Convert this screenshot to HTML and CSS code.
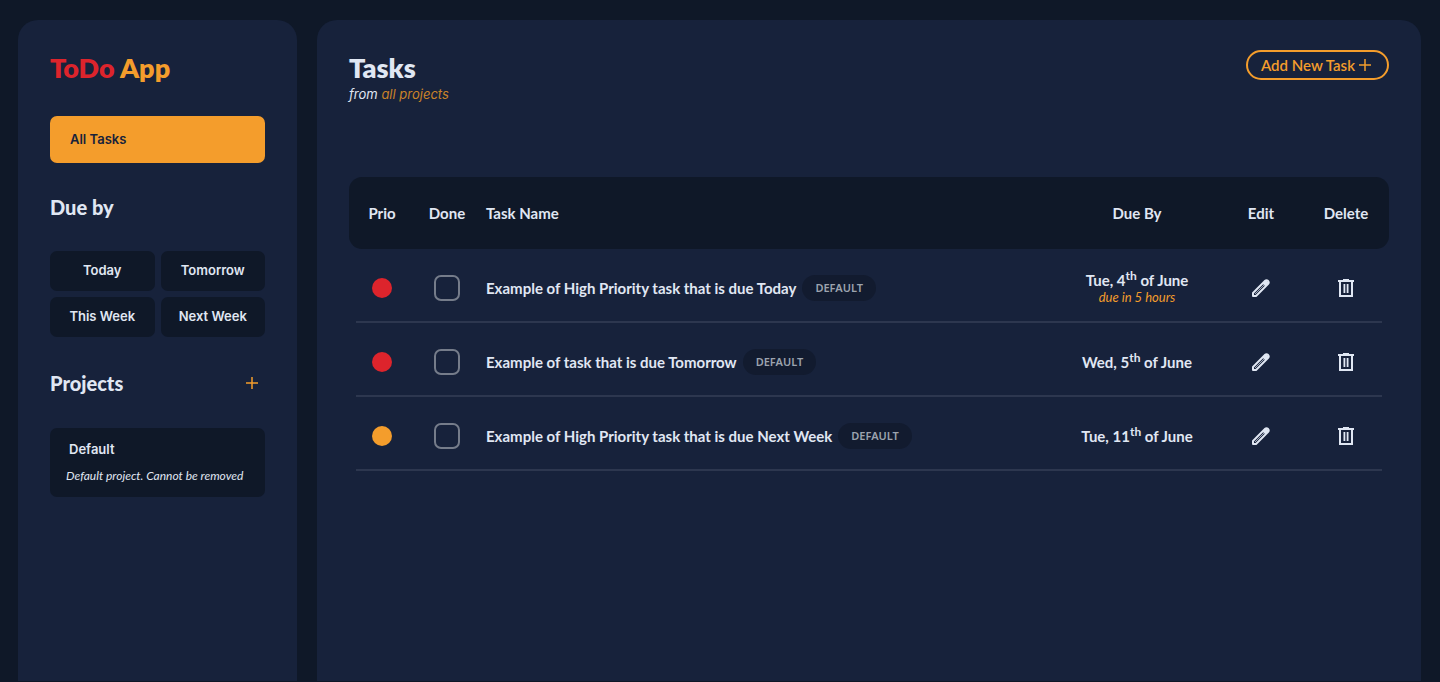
FILE: index.html
```html
<!DOCTYPE html>
<html lang="en">
<head>
<meta charset="utf-8">
<title>ToDo App</title>
<link rel="stylesheet" href="styles.css">
</head>
<body>
<svg class="sprite" aria-hidden="true">
  <symbol id="pencil" viewBox="0 0 18 18"><path fill="none" stroke="currentColor" stroke-width="2" stroke-linejoin="round" d="M1 17v-3L13.200 1.800a1.800 1.800 0 0 1 2.600 0l.4.4a1.800 1.800 0 0 1 0 2.600L4 17z"/><path fill="currentColor" d="M10.500 4.500L14 1l3 3-3.500 3.500z"/><path stroke="currentColor" stroke-width=".7" d="M3 15l9-9"/></symbol>
  <symbol id="trash" viewBox="0 0 18 18"><path fill="none" stroke="currentColor" stroke-width="2" d="M1 2h16M6 1h6M3 2.500V17h12V2.500"/><path stroke="currentColor" stroke-width="1.800" d="M7.400 5v9M10.600 5v9"/></symbol>
  <symbol id="plus" viewBox="0 0 12 12"><path stroke="currentColor" stroke-width="1.500" d="M6 0v12M0 6h12"/></symbol>
</svg>
<div class="app">
  <aside class="panel sidebar">
    <h1 class="logo"><span class="logo-red">ToDo</span> App</h1>
    <button class="all-tasks">All Tasks</button>
    <h2 class="section-title">Due by</h2>
    <div class="due-grid">
      <button class="due-button">Today</button>
      <button class="due-button">Tomorrow</button>
      <button class="due-button">This Week</button>
      <button class="due-button">Next Week</button>
    </div>
    <div class="projects-head">
      <h2 class="section-title">Projects</h2>
      <button class="add-project" aria-label="Add project"><svg class="plus-icon"><use href="#plus"/></svg></button>
    </div>
    <button class="project">
      <span class="project-name">Default</span>
      <em class="project-note">Default project. Cannot be removed</em>
    </button>
  </aside>
  <main class="panel main">
    <header class="main-head">
      <div class="main-heading">
        <h2 class="main-title">Tasks</h2>
        <p class="subtitle">from <span class="subtitle-project">all projects</span></p>
      </div>
      <button class="add-task">Add New Task <svg class="plus-icon"><use href="#plus"/></svg></button>
    </header>
    <table class="tasks">
      <thead>
        <tr><th class="col-prio">Prio</th><th class="col-done">Done</th><th class="name">Task Name</th><th class="col-due">Due By</th><th class="col-edit">Edit</th><th class="col-delete">Delete</th></tr>
      </thead>
      <tbody>
        <tr>
          <td><span class="dot dot-high"></span></td>
          <td><input class="check" type="checkbox" aria-label="Done"></td>
          <td class="name"><div class="task"><span>Example of High Priority task that is due Today</span><span class="tag">DEFAULT</span></div></td>
          <td><div class="date">Tue, 4<sup>th</sup> of June</div><em class="due-in">due in 5 hours</em></td>
          <td><button class="icon-button" aria-label="Edit"><svg class="icon"><use href="#pencil"/></svg></button></td>
          <td><button class="icon-button" aria-label="Delete"><svg class="icon"><use href="#trash"/></svg></button></td>
        </tr>
        <tr>
          <td><span class="dot dot-high"></span></td>
          <td><input class="check" type="checkbox" aria-label="Done"></td>
          <td class="name"><div class="task"><span>Example of task that is due Tomorrow</span><span class="tag">DEFAULT</span></div></td>
          <td><div class="date">Wed, 5<sup>th</sup> of June</div></td>
          <td><button class="icon-button" aria-label="Edit"><svg class="icon"><use href="#pencil"/></svg></button></td>
          <td><button class="icon-button" aria-label="Delete"><svg class="icon"><use href="#trash"/></svg></button></td>
        </tr>
        <tr>
          <td><span class="dot dot-medium"></span></td>
          <td><input class="check" type="checkbox" aria-label="Done"></td>
          <td class="name"><div class="task"><span>Example of High Priority task that is due Next Week</span><span class="tag">DEFAULT</span></div></td>
          <td><div class="date">Tue, 11<sup>th</sup> of June</div></td>
          <td><button class="icon-button" aria-label="Edit"><svg class="icon"><use href="#pencil"/></svg></button></td>
          <td><button class="icon-button" aria-label="Delete"><svg class="icon"><use href="#trash"/></svg></button></td>
        </tr>
      </tbody>
    </table>
  </main>
</div>
</body>
</html>
```
FILE: styles.css
```css
:root {
  --bg: #0f1828;
  --panel: #17223b;
  --text: #e0e7f3;
  --orange: #f49d2c;
  --red: #dd242c;
}
* { box-sizing: border-box; }
body {
  margin: 0;
  background: var(--bg);
  color: var(--text);
  font-family: Lato, "Open Sans", sans-serif;
  font-size: 15px;
  line-height: 20px;
}
h1, h2, p { margin: 0; }
button {
  font: inherit;
  color: inherit;
  border: 0;
  background: none;
  padding: 0;
  cursor: pointer;
}
.sprite { display: none; }
.app {
  display: grid;
  grid-template-columns: 279px 1fr;
  gap: 20px;
  min-height: 100vh;
  padding: 20px 19px 1px 18px;
}
.panel {
  background: var(--panel);
  border-radius: 20px 20px 0 0;
  padding: 32px;
}
.main { padding-top: 30px; }
.main-heading { padding-top: 2px; }
.logo, .main-title {
  font-size: 27px;
  line-height: 32px;
  font-weight: 800;
}
.logo { color: var(--orange); }
.logo-red { color: var(--red); }
.all-tasks {
  display: block;
  width: 100%;
  height: 47px;
  margin: 32px 0 31px;
  padding: 0 20px 2px;
  border-radius: 7px;
  background: var(--orange);
  color: #17223b;
  text-align: left;
  font-family: Inter, sans-serif;
  font-size: 13px;
  font-weight: 600;
}
.section-title {
  font-size: 20px;
  line-height: 26px;
  font-weight: 900;
}
.due-grid {
  display: grid;
  grid-template-columns: 1fr 1fr;
  gap: 6px;
  margin: 31px 0 33px;
}
.due-button {
  height: 40px;
  padding-bottom: 2px;
  border-radius: 7px;
  background: var(--bg);
  font-family: Inter, sans-serif;
  font-size: 13px;
  font-weight: 600;
}
.projects-head {
  display: flex;
  justify-content: space-between;
  align-items: center;
  padding-right: 7px;
}
.add-project { display: flex; color: var(--orange); }
.plus-icon { width: 12px; height: 12px; }
.project {
  display: flex;
  flex-direction: column;
  justify-content: center;
  gap: 7px;
  width: 100%;
  height: 69px;
  margin-top: 32px;
  padding: 0 16px;
  border-radius: 7px;
  background: var(--bg);
  text-align: left;
}
.project-name {
  padding-left: 3px;
  font-family: Inter, sans-serif;
  font-size: 13px;
  font-weight: 600;
}
.project-note { font-size: 12px; white-space: nowrap; }
.main-head {
  display: flex;
  justify-content: space-between;
  align-items: flex-start;
  margin-bottom: 73px;
}
.subtitle {
  font-family: Inter, sans-serif;
  font-size: 13px;
  font-style: italic;
}
.subtitle-project { color: #c98329; }
.add-task {
  display: flex;
  align-items: center;
  gap: 4px;
  height: 30px;
  padding: 0 16px 0 13px;
  border: 2px solid var(--orange);
  border-radius: 15px;
  color: var(--orange);
  font-weight: 600;
}
.tasks {
  width: 100%;
  table-layout: fixed;
  border-spacing: 0;
  text-align: center;
  font-weight: 700;
}
.tasks th, .tasks td { padding: 0; }
.tasks th { height: 72px; background: var(--bg); }
.tasks th:first-child { border-radius: 13px 0 0 13px; }
.tasks th:last-child { border-radius: 0 13px 13px 0; }
.tasks tbody tr {
  height: 74px;
  background: linear-gradient(#2d374f, #2d374f) center bottom / calc(100% - 14px) 2px no-repeat;
}
.col-prio { width: 66px; }
.col-done { width: 64px; }
.col-due { width: 164px; }
.col-edit { width: 84px; }
.col-delete { width: 86px; }
.tasks .name { padding-left: 7px; text-align: left; }
.dot {
  display: block;
  width: 20px;
  height: 20px;
  margin: 4px auto 0;
  border-radius: 50%;
}
.dot-high { background: var(--red); }
.dot-medium { background: var(--orange); }
.check {
  display: block;
  appearance: none;
  width: 26px;
  height: 26px;
  margin: 4px auto 0;
  border: 2px solid #757c8a;
  border-radius: 7px;
}
.task { display: flex; align-items: center; gap: 6px; padding-top: 4px; }
.tag {
  padding: 3px 13px;
  border-radius: 13px;
  background: #121b2f;
  color: #9ca3ae;
  font-family: "Noto Sans", sans-serif;
  font-size: 11px;
  font-weight: 600;
}
.date { padding-top: 4px; }
.date sup { font-size: 12px; line-height: 0; }
.due-in {
  display: block;
  padding-bottom: 3px;
  color: var(--orange);
  font-size: 13px;
  line-height: 14px;
  font-weight: 400;
}
.icon-button { display: block; margin: 4px auto 0; }
.icon { display: block; width: 18px; height: 18px; }
```
